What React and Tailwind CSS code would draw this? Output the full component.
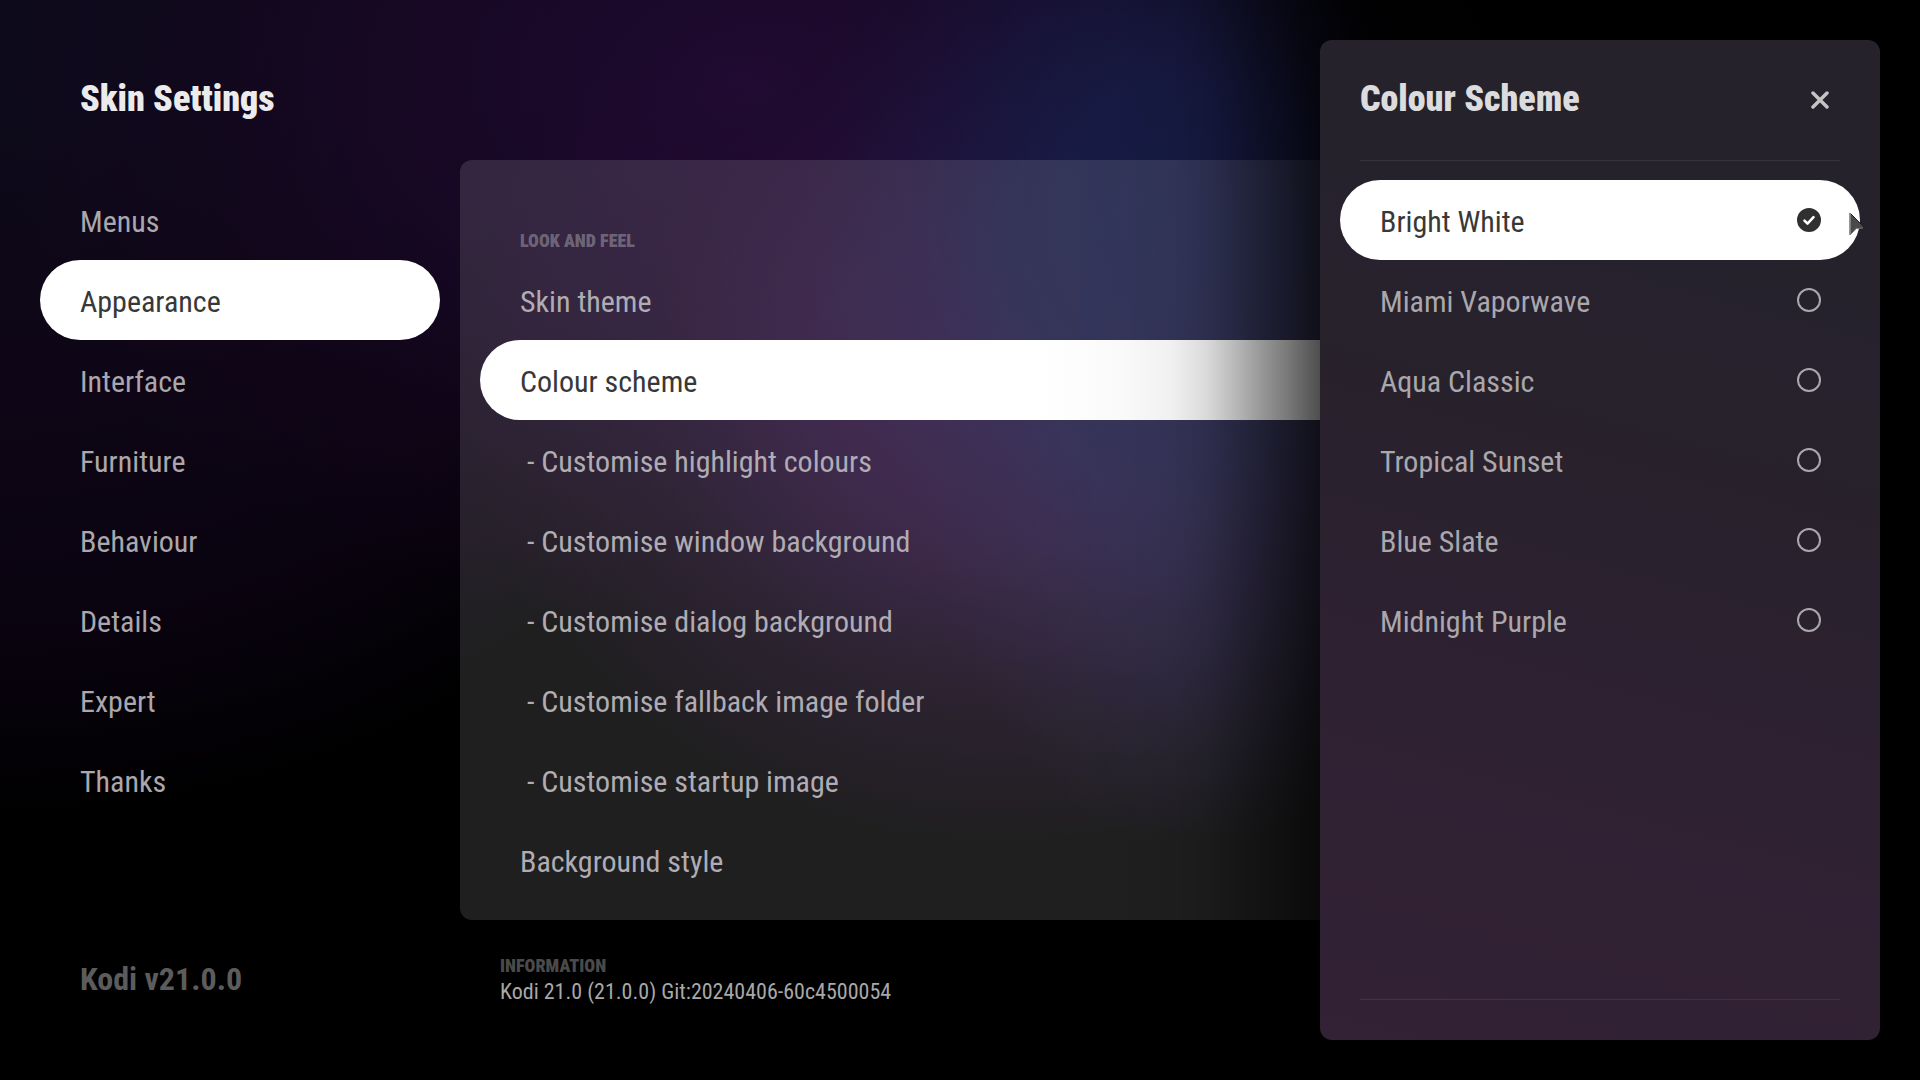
import { useState } from "react";

const sections = ["Menus", "Appearance", "Interface", "Furniture", "Behaviour", "Details", "Expert", "Thanks"];

const settings = [
  { label: "Skin theme" },
  { label: "Colour scheme" },
  { label: "- Customise highlight colours", nested: true },
  { label: "- Customise window background", nested: true },
  { label: "- Customise dialog background", nested: true },
  { label: "- Customise fallback image folder", nested: true },
  { label: "- Customise startup image", nested: true },
  { label: "Background style" },
];

const schemes = ["Bright White", "Miami Vaporwave", "Aqua Classic", "Tropical Sunset", "Blue Slate", "Midnight Purple"];

function Sidebar() {
  return (
    <nav aria-label="Skin settings" className="flex flex-col pt-5">
      {sections.map((name) => (
        <button
          key={name}
          type="button"
          className={
            "flex h-20 items-center rounded-full px-10 pt-0.5 text-left text-[30px] " +
            (name === "Appearance" ? "bg-white text-[#383838]" : "text-[#aaa7ad]")
          }
        >
          {name}
        </button>
      ))}
    </nav>
  );
}

function SettingsPanel() {
  return (
    <section className="flex flex-col rounded-xl bg-white/12 px-5 pb-5">
      <h2 className="flex h-25 items-end px-10 pb-[5px] text-[18px] leading-7 font-black text-white/30 uppercase">
        Look and feel
      </h2>
      {settings.map(({ label, nested }) => (
        <button
          key={label}
          type="button"
          className={
            "flex h-20 items-center rounded-full pt-0.5 pr-10 text-left text-[30px] " +
            (nested ? "pl-[47px] " : "pl-10 ") +
            (label === "Colour scheme" ? "bg-white text-[#383838]" : "text-[#b0acb3]")
          }
        >
          {label}
        </button>
      ))}
    </section>
  );
}

function SchemeOption({ name, checked, onSelect }) {
  return (
    <label
      className={
        "flex h-20 items-center justify-between rounded-full pr-[39px] pl-10 text-[30px] " +
        (checked ? "bg-white text-[#383838]" : "text-[#aaa7ad]")
      }
    >
      <span className="pt-0.5">{name}</span>
      <span className="relative flex size-6">
        <input
          type="radio"
          name="scheme"
          checked={checked}
          onChange={onSelect}
          className="size-6 appearance-none rounded-full border-2 border-[#aaa7ad] checked:border-[#303030] checked:bg-[#303030]"
        />
        {checked && (
          <svg viewBox="0 0 24 24" className="pointer-events-none absolute inset-0 size-6" fill="none" aria-hidden="true">
            <path d="M7.500 12.600l3 3 6-6.400" stroke="#fff" strokeWidth="2.600" strokeLinecap="round" strokeLinejoin="round" />
          </svg>
        )}
      </span>
    </label>
  );
}

function SchemeDialog() {
  const [scheme, setScheme] = useState("Bright White");
  return (
    <aside
      role="dialog"
      aria-label="Colour Scheme"
      className="absolute inset-y-10 right-10 flex w-140 flex-col rounded-xl bg-[linear-gradient(195deg,#25222b_0%,#26222d_25%,#28212c_42%,#2e2132_65%,#332135_100%)] px-5"
    >
      <header className="mx-5 flex h-[121px] items-center justify-between border-b border-white/8 pr-[11px]">
        <h2 className="pb-0.5 text-[36px] font-black text-[#dcdbdd]">Colour Scheme</h2>
        <button type="button" aria-label="Close" className="text-[#c4c3c6]">
          <svg viewBox="0 0 18 18" className="size-[18px]" fill="none" stroke="currentColor" strokeWidth="3.500" strokeLinecap="round" aria-hidden="true">
            <path d="M2 2l14 14M16 2L2 16" />
          </svg>
        </button>
      </header>
      <fieldset className="mt-[19px] flex flex-1 flex-col">
        {schemes.map((name) => (
          <SchemeOption key={name} name={name} checked={name === scheme} onSelect={() => setScheme(name)} />
        ))}
      </fieldset>
      <footer className="mx-5 h-[41px] border-t border-white/8" />
      <svg viewBox="0 0 18 26" className="pointer-events-none absolute top-[171px] right-[14px] h-[26px] w-[18px]" aria-hidden="true">
        <path d="M2 2v22l6-6.500 8.500-.8z" fill="#4a4a4a" stroke="#1c1c1c" strokeWidth="1" strokeLinejoin="round" />
        <path d="M2 2v22" stroke="#9a9a9a" strokeWidth="1.500" />
        <path d="M2 24l6-6.500 7-.6" fill="none" stroke="#8a8a8a" strokeWidth="1" />
      </svg>
    </aside>
  );
}

export default function App() {
  return (
    <div className="relative min-h-screen overflow-hidden bg-black font-['Roboto_Condensed','Liberation_Sans_Narrow',sans-serif] [background-image:radial-gradient(ellipse_360px_400px_at_1160px_200px,#161c46_0%,#161c46dd_30%,#161c4677_60%,#161c4622_85%,transparent_100%),radial-gradient(ellipse_300px_420px_at_1220px_440px,#1e1b46cc_0%,#1e1b4699_40%,#1e1b4633_75%,transparent_100%),radial-gradient(ellipse_540px_480px_at_1000px_380px,#2c1040_0%,#2b103ecc_35%,#260c3466_65%,transparent_100%),radial-gradient(ellipse_760px_560px_at_740px_80px,#1e0a30_0%,#1c092cbb_40%,#18072244_75%,transparent_100%),radial-gradient(ellipse_900px_820px_at_0px_0px,#0c0b1c_0%,#0e0616_45%,#0a0310_75%,transparent_100%)]">
      <main className="grid min-h-screen grid-cols-[400px_1fr] grid-rows-[160px_auto_1fr] gap-x-5 px-10">
        <h1 className="col-span-2 px-10 pt-[81px] text-[36px] leading-9 font-black text-[#ebebec]">Skin Settings</h1>
        <Sidebar />
        <SettingsPanel />
        <p className="px-10 pt-[39px] text-[32px] leading-10 font-bold text-[#5c5c5c]">Kodi v21.0.0</p>
        <div className="px-10 pt-8">
          <h2 className="text-[18px] leading-7 font-black text-[#4a4a4a] uppercase">Information</h2>
          <p className="text-[22px] leading-6 text-[#a8a8a8]">Kodi 21.0 (21.0.0) Git:20240406-60c4500054</p>
        </div>
      </main>
      <div className="pointer-events-none absolute inset-y-0 right-0 w-220 bg-[linear-gradient(to_right,transparent_0%,rgba(0,0,0,.02)_9%,rgba(0,0,0,.06)_15%,rgba(0,0,0,.15)_19%,rgba(0,0,0,.27)_22%,rgba(0,0,0,.4)_25%,rgba(0,0,0,.52)_28%,rgba(0,0,0,.7)_32%,rgba(0,0,0,.88)_38%,rgba(0,0,0,.97)_100%)]" />
      <SchemeDialog />
    </div>
  );
}
